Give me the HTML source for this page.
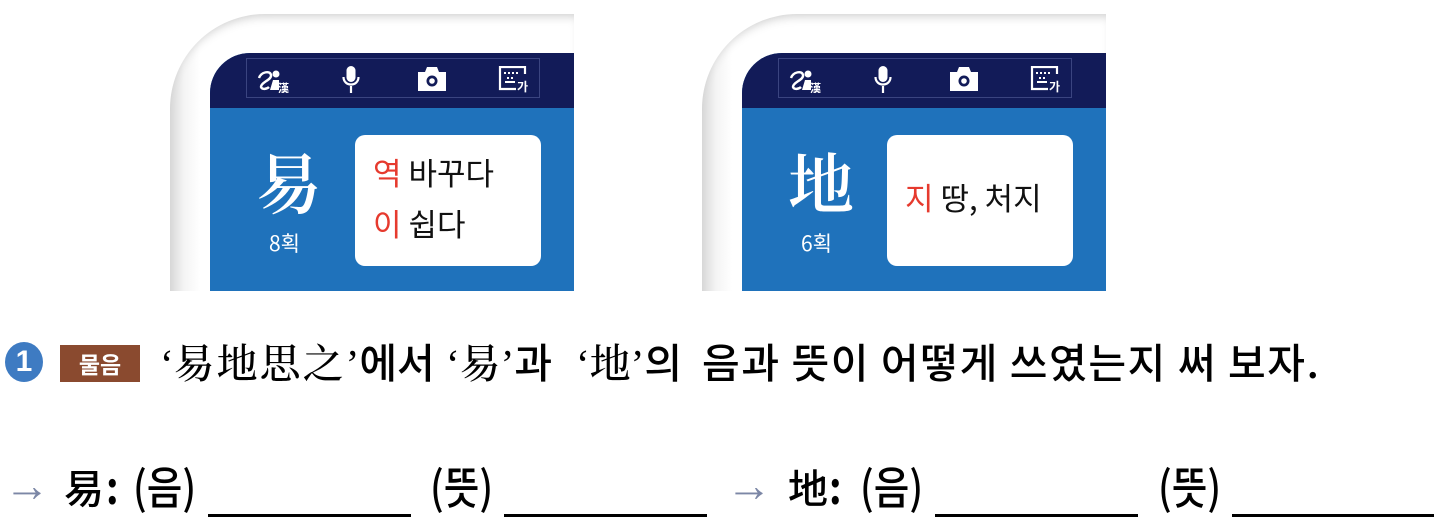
<!DOCTYPE html>
<html><head><meta charset="utf-8"><style>
*{margin:0;padding:0;box-sizing:border-box}
body{width:1434px;height:520px;background:#fff;position:relative;overflow:hidden;font-family:"Liberation Sans","Noto Sans CJK KR",sans-serif}
.a{position:absolute}
.dev{position:absolute;top:14px;width:404px;height:277px}
.bez{position:absolute;left:0;top:0;width:404px;height:277px;border-top-left-radius:95px;background:linear-gradient(90deg,#d8d8d8 0,#f4f4f4 14px,#fff 30px);box-shadow:inset 0 8px 10px -6px #ccc}
.scr{position:absolute;left:40px;top:39px;width:364px;height:238px;border-top-left-radius:40px;background:#1f72bb;overflow:hidden}
.nav{position:absolute;left:0;top:0;width:364px;height:55px;background:#121b58}
.tb{position:absolute;left:36px;top:5px;width:294px;height:40px;border:1px solid #3a4480}
.hj{position:absolute;color:#fff;font-family:"Noto Serif CJK SC",serif;font-weight:600;font-size:66px;line-height:1}
.st{position:absolute;color:#fff;font-size:21px;font-family:"Noto Sans CJK KR",sans-serif;line-height:1}
.card{position:absolute;left:145px;top:82px;width:186px;height:131px;background:#fff;border-radius:10px;font-family:"Noto Sans CJK KR",sans-serif;font-size:31px;color:#111;line-height:1}
.r{color:#e63a2e}
.kr{font-family:"Noto Sans CJK KR",sans-serif}
.serif{font-family:"Noto Serif CJK SC",serif}
.q{position:absolute;top:336px;font-size:41px;line-height:1.2;white-space:nowrap;font-family:"Noto Sans CJK KR",sans-serif;font-weight:500;color:#000}
.qs{font-family:"Liberation Serif",serif}
.ul{position:absolute;height:3px;background:#000;top:514px}
.ans{position:absolute;top:462px;font-size:45px;line-height:1;font-family:"Noto Sans CJK KR",sans-serif;font-weight:500;color:#000;transform:scaleX(.86);transform-origin:left}
</style></head><body>

<div class="dev" style="left:170px">
 <div class="bez"></div>
 <div class="scr">
  <div class="nav"><div class="tb"></div>
   <svg class="a" style="left:46px;top:12px" width="34" height="28" viewBox="0 0 34 28"><path d="M3 13c2-6 11-8 12-3s-10 7-10 12c1 3 6 2 8 0" fill="none" stroke="#fff" stroke-width="2.4"/><circle cx="20" cy="9" r="3.5" fill="#fff"/><path d="M14 25l3-10h6v10z" fill="#fff"/><text x="22" y="27" font-size="11" fill="#fff" font-family="Noto Sans CJK SC" font-weight="bold">漢</text></svg>
   <svg class="a" style="left:132px;top:12px" width="18" height="30" viewBox="0 0 18 30"><rect x="4.5" y="1" width="9" height="16" rx="4.5" fill="#fff"/><path d="M1.5 12c0 10 15 10 15 0" fill="none" stroke="#fff" stroke-width="2.2"/><path d="M9 21v7" stroke="#fff" stroke-width="2.2"/></svg>
   <svg class="a" style="left:207px;top:13px" width="30" height="26" viewBox="0 0 30 26"><path d="M1 6h7l2-5h10l2 5h7v19H1z" fill="#fff"/><circle cx="15" cy="15" r="5.5" fill="#121b58"/><circle cx="15" cy="15" r="2.8" fill="#fff"/></svg>
   <svg class="a" style="left:288px;top:13px" width="32" height="27" viewBox="0 0 32 27"><path d="M23 1H2v22h16" fill="none" stroke="#fff" stroke-width="2.2"/><path d="M23 1h4v7" fill="none" stroke="#fff" stroke-width="2.2"/><g fill="#fff"><rect x="6" y="6" width="2" height="2"/><rect x="10" y="6" width="2" height="2"/><rect x="14" y="6" width="2" height="2"/><rect x="18" y="6" width="2" height="2"/><rect x="9" y="11" width="2" height="2"/><rect x="13" y="11" width="2" height="2"/><rect x="7" y="15" width="10" height="2"/></g><text x="19" y="25" font-size="12" fill="#fff" font-family="Noto Sans CJK KR" font-weight="bold">가</text></svg>
  </div>
  <div class="hj" style="left:46px;top:94px">易</div>
  <div class="st" style="left:59px;top:180px">8획</div>
  <div class="card"><div class="a" style="left:18px;top:21px"><span class="r">역</span> 바꾸다</div><div class="a" style="left:18px;top:72px"><span class="r">이</span> 쉽다</div></div>
 </div>
</div>

<div class="dev" style="left:702px">
 <div class="bez"></div>
 <div class="scr">
  <div class="nav"><div class="tb"></div>
   <svg class="a" style="left:46px;top:12px" width="34" height="28" viewBox="0 0 34 28"><path d="M3 13c2-6 11-8 12-3s-10 7-10 12c1 3 6 2 8 0" fill="none" stroke="#fff" stroke-width="2.4"/><circle cx="20" cy="9" r="3.5" fill="#fff"/><path d="M14 25l3-10h6v10z" fill="#fff"/><text x="22" y="27" font-size="11" fill="#fff" font-family="Noto Sans CJK SC" font-weight="bold">漢</text></svg>
   <svg class="a" style="left:132px;top:12px" width="18" height="30" viewBox="0 0 18 30"><rect x="4.5" y="1" width="9" height="16" rx="4.5" fill="#fff"/><path d="M1.5 12c0 10 15 10 15 0" fill="none" stroke="#fff" stroke-width="2.2"/><path d="M9 21v7" stroke="#fff" stroke-width="2.2"/></svg>
   <svg class="a" style="left:207px;top:13px" width="30" height="26" viewBox="0 0 30 26"><path d="M1 6h7l2-5h10l2 5h7v19H1z" fill="#fff"/><circle cx="15" cy="15" r="5.5" fill="#121b58"/><circle cx="15" cy="15" r="2.8" fill="#fff"/></svg>
   <svg class="a" style="left:288px;top:13px" width="32" height="27" viewBox="0 0 32 27"><path d="M23 1H2v22h16" fill="none" stroke="#fff" stroke-width="2.2"/><path d="M23 1h4v7" fill="none" stroke="#fff" stroke-width="2.2"/><g fill="#fff"><rect x="6" y="6" width="2" height="2"/><rect x="10" y="6" width="2" height="2"/><rect x="14" y="6" width="2" height="2"/><rect x="18" y="6" width="2" height="2"/><rect x="9" y="11" width="2" height="2"/><rect x="13" y="11" width="2" height="2"/><rect x="7" y="15" width="10" height="2"/></g><text x="19" y="25" font-size="12" fill="#fff" font-family="Noto Sans CJK KR" font-weight="bold">가</text></svg>
  </div>
  <div class="hj" style="left:46px;top:94px">地</div>
  <div class="st" style="left:59px;top:180px">6획</div>
  <div class="card"><div class="a" style="left:18px;top:46px"><span class="r">지</span> 땅, 처지</div></div>
 </div>
</div>

<div class="a" style="left:5px;top:342px;width:38px;height:40px;border-radius:50%;background:#3e7bc2;color:#fff;font-size:30px;font-weight:bold;text-align:center;line-height:40px">1</div>
<div class="a kr" style="left:60px;top:345px;width:80px;height:37px;background:#8a4a2f;color:#fff;font-size:23px;font-weight:bold;text-align:center;line-height:37px">물음</div>

<div class="q" style="left:160px"><span class="qs">‘</span><span class="serif" style="letter-spacing:2px">易地思之</span><span class="qs">’</span>에서</div>
<div class="q" style="left:446px"><span class="qs">‘</span><span class="serif">易</span><span class="qs">’</span>과</div>
<div class="q" style="left:576px"><span class="qs">‘</span><span class="serif">地</span><span class="qs">’</span>의</div>
<div class="q" style="left:702px;letter-spacing:1.6px">음과 뜻이 어떻게 쓰였는지 써 보자.</div>

<div class="a" style="left:4px;top:458px;font-size:46px;color:#7c87a6">→</div>
<div class="ans serif" style="left:64px;transform:none;font-size:40px;top:466px">易</div>
<div class="ans" style="left:106px;font-weight:bold">:</div>
<div class="ans" style="left:133px">(음)</div>
<div class="ul" style="left:208px;width:203px"></div>
<div class="ans" style="left:430px">(뜻)</div>
<div class="ul" style="left:504px;width:203px"></div>

<div class="a" style="left:726px;top:458px;font-size:46px;color:#7c87a6">→</div>
<div class="ans serif" style="left:788px;transform:none;font-size:40px;top:466px">地</div>
<div class="ans" style="left:829px;font-weight:bold">:</div>
<div class="ans" style="left:860px">(음)</div>
<div class="ul" style="left:935px;width:203px"></div>
<div class="ans" style="left:1158px">(뜻)</div>
<div class="ul" style="left:1232px;width:202px"></div>
</body></html>
